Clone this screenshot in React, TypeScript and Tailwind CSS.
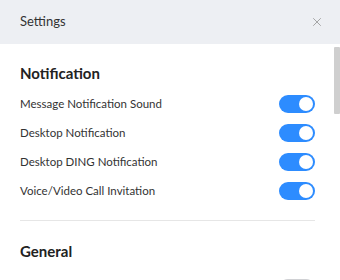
import { X } from 'lucide-react';

const notifications = [
  { label: 'Message Notification Sound', on: true },
  { label: 'Desktop Notification', on: true },
  { label: 'Desktop DING Notification', on: true },
  { label: 'Voice/Video Call Invitation', on: true },
];

function Toggle({ on }: { on: boolean }) {
  return (
    <div
      className={`w-[36px] h-[18px] rounded-full flex items-center px-[2px] ${
        on ? 'bg-[#2d8cff] justify-end' : 'bg-[#d0d1d4] justify-start'
      }`}
    >
      <div className="w-[14px] h-[14px] rounded-full bg-white" />
    </div>
  );
}

function Row({ label, on }: { label: string; on: boolean }) {
  return (
    <div className="h-[29px] flex items-center justify-between">
      <span className="text-[11.5px] text-[#333]">{label}</span>
      <Toggle on={on} />
    </div>
  );
}

function App() {
  return (
    <div
      className="w-[340px] h-[280px] overflow-hidden bg-white flex flex-col"
      style={{ fontFamily: 'Lato, "Open Sans", sans-serif' }}
    >
      {/* Header */}
      <header className="h-[44px] shrink-0 bg-[#edeff3] flex items-center justify-between pl-5 pr-[16px]">
        <span className="text-[13px] text-[#333]">Settings</span>
        <X className="w-[14px] h-[14px] text-[#9a9a9a]" strokeWidth={1.5} />
      </header>

      <div className="flex flex-1 min-h-0">
        <main className="flex-1 pl-5 pr-[19px] pt-[19px]">
          <h2 className="h-[20px] flex items-center text-[15px] font-bold text-[#222]">Notification</h2>
          <div className="mt-[6px]">
            {notifications.map((n) => (
              <Row key={n.label} label={n.label} on={n.on} />
            ))}
          </div>
          <div className="border-t border-[#e6e6e6] mt-[15px]" />
          <h2 className="h-[20px] mt-[20px] flex items-center text-[15px] font-bold text-[#222]">General</h2>
          <div className="mt-[12px]">
            <Row label="Start Zoom when I start Windows" on={false} />
          </div>
        </main>

        {/* Scrollbar */}
        <div className="w-[6px] shrink-0 pt-[3px]">
          <div className="h-[67px] bg-[#cfcfcf] rounded-[1px]" />
        </div>
      </div>
    </div>
  );
}

export default App;
